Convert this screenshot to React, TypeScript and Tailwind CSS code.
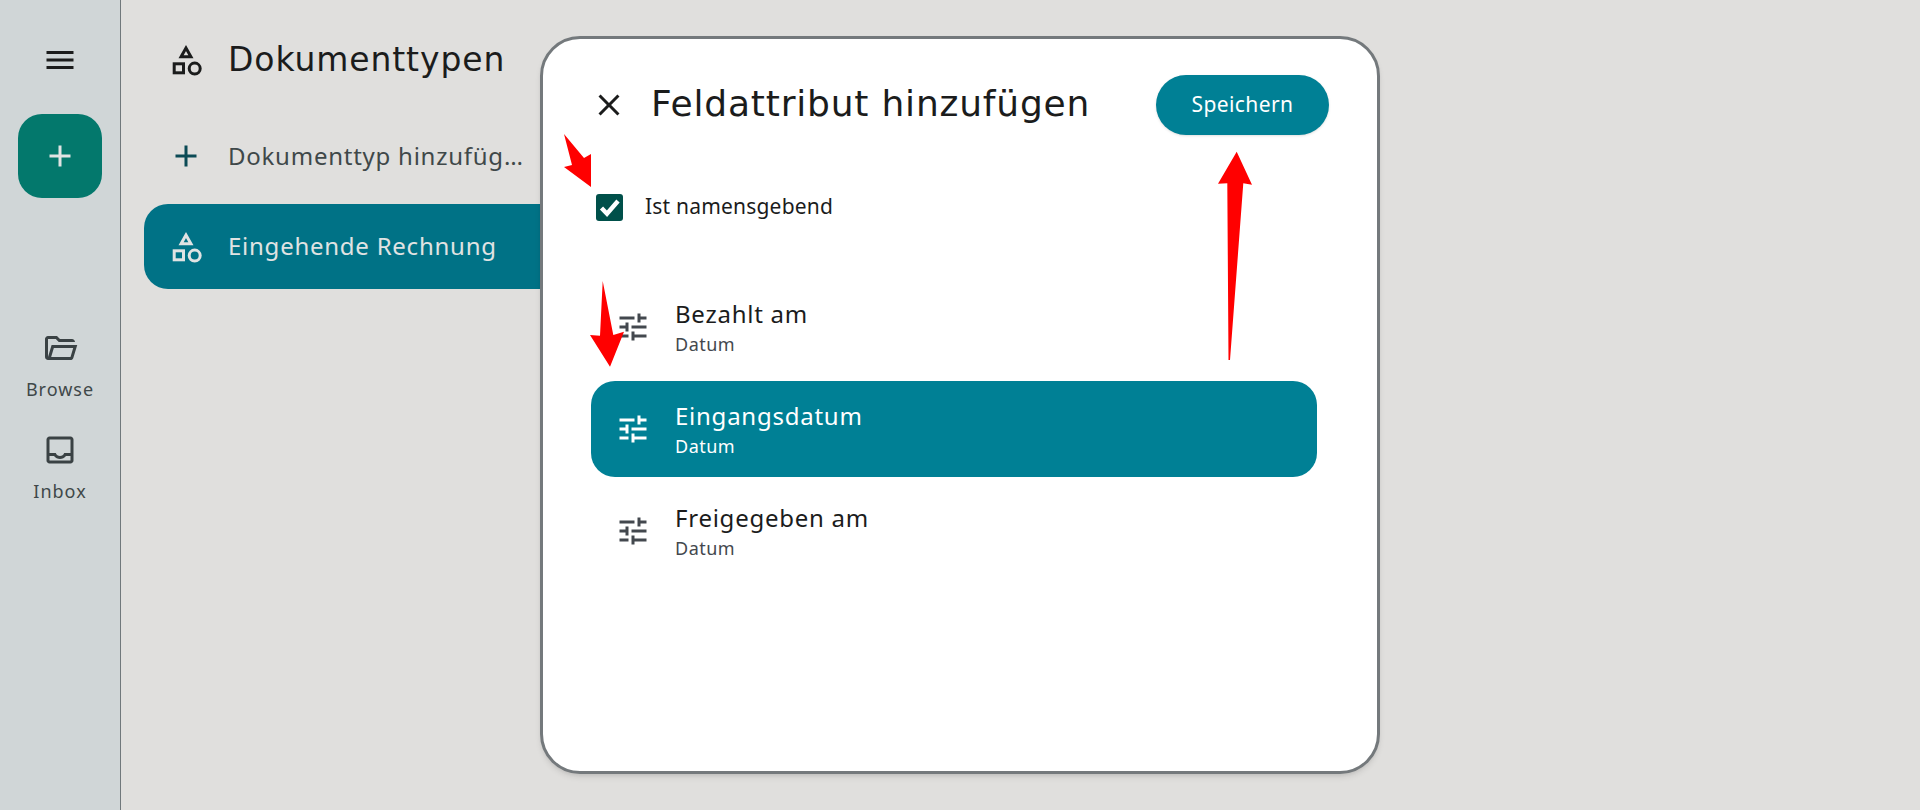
const MenuIcon = () => (
  <svg viewBox="0 0 24 24" className="w-9 h-9 fill-[#1b1c1c]">
    <path d="M3 18h18v-2H3v2zm0-5h18v-2H3v2zm0-7v2h18V6H3z" />
  </svg>
);

const PlusIcon = ({ className }: { className: string }) => (
  <svg viewBox="0 0 24 24" className={className}>
    <path d="M19 13h-6v6h-2v-6H5v-2h6V5h2v6h6v2z" />
  </svg>
);

const ShapesIcon = ({ className }: { className: string }) => (
  <svg viewBox="0 0 36 36" className={className} fill="none" stroke="currentColor" strokeWidth="3">
    <path d="M18 6 L13.07 14.8 H22.93 Z" />
    <rect x="6.2" y="21.8" width="9.3" height="9" />
    <circle cx="26.7" cy="26.6" r="5.5" />
  </svg>
);

const TuneIcon = ({ className }: { className: string }) => (
  <svg viewBox="0 0 24 24" className={className}>
    <path d="M3 17v2h6v-2H3zM3 5v2h10V5H3zm10 16v-2h8v-2h-8v-2h-2v6h2zM7 9v2H3v2h4v2h2V9H7zm14 4v-2H11v2h10zm-6-4h2V7h4V5h-4V3h-2v6z" />
  </svg>
);

const RAIL_ITEMS = [
  {
    label: "Browse",
    d: "M160-160q-33 0-56.5-23.5T80-240v-480q0-33 23.5-56.5T160-800h240l80 80h320q33 0 56.5 23.5T880-640H447l-80-80H160v480l96-320h684L837-217q-8 26-29.5 41.5T760-160H160Zm84-80h516l72-240H316l-72 240Zm0 0 72-240-72 240Zm-84-400v-80 80Z",
  },
  {
    label: "Inbox",
    d: "M200-120q-33 0-56.5-23.5T120-200v-560q0-33 23.5-56.5T200-840h560q33 0 56.5 23.5T840-760v560q0 33-23.5 56.5T760-120H200Zm0-80h560v-120H640q-30 38-71.5 59T480-240q-47 0-88.5-21T320-320H200v120Zm280-120q38 0 69-22t43-58h168v-360H200v360h168q12 36 43 58t69 22ZM200-200h560-560Z",
  },
];

const FIELDS = [
  { label: "Bezahlt am", active: false },
  { label: "Eingangsdatum", active: true },
  { label: "Freigegeben am", active: false },
];

const App = () => {
  return (
    <div className="relative flex h-[810px] w-[1920px] overflow-hidden bg-[#e0dfdd] font-['Noto_Sans',sans-serif] text-[#1b1c1c]">
      {/* Rail */}
      <aside className="flex w-[121px] flex-col items-center border-r border-[#70787b] bg-[#d0d6d7] pt-[42px]">
        <MenuIcon />
        <div className="mt-[36px] flex h-[84px] w-[84px] items-center justify-center rounded-[24px] bg-[#03786c]">
          <PlusIcon className="h-9 w-9 fill-[#e0e3e3]" />
        </div>
        <div className="mt-[132px] flex flex-col gap-[27px]">
          {RAIL_ITEMS.map((item) => (
            <div key={item.label} className="flex h-[75px] flex-col items-center text-[#3f4849]">
              <svg viewBox="0 -960 960 960" className="h-9 w-9 fill-[#3a4244]">
                <path d={item.d} />
              </svg>
              <span className="mt-[8px] text-[18px] leading-[30px] tracking-[1px]">{item.label}</span>
            </div>
          ))}
        </div>
      </aside>

      {/* Document types pane */}
      <section className="flex flex-1 flex-col pl-[23px] pt-[42px]">
        <div className="flex h-9 items-center pl-[24px]">
          <ShapesIcon className="h-9 w-9 text-[#1b1c1c]" />
          <h1 className="ml-[24px] font-['DejaVu_Sans',sans-serif] text-[33px] tracking-[0.9px]">Dokumenttypen</h1>
        </div>
        <div className="mt-[36px] flex h-[84px] w-[440px] items-center pl-[24px]">
          <PlusIcon className="h-9 w-9 fill-[#0b4a55]" />
          <span className="ml-[24px] text-[24px] tracking-[0.75px] text-[#3f4849]">Dokumenttyp hinzufüg…</span>
        </div>
        <div className="mt-[6px] flex h-[85px] w-[440px] items-center rounded-l-[24px] bg-[#007286] pl-[24px] text-[#e0e3e3]">
          <ShapesIcon className="h-9 w-9" />
          <span className="ml-[24px] -mt-[2px] text-[24px] tracking-[0.75px]">Eingehende Rechnung</span>
        </div>
      </section>

      {/* Dialog */}
      <div className="absolute left-[540px] top-[36px] flex h-[738px] w-[840px] flex-col rounded-[40px] border-[3px] border-[#74797c] bg-white pl-[48px] pr-[48px] shadow-md">
        <div className="mt-[36px] flex h-[60px] items-center">
          <svg viewBox="0 0 24 24" className="h-9 w-9 fill-[#1b1c1c]">
            <path d="M19 6.41L17.59 5 12 10.59 6.41 5 5 6.41 10.59 12 5 17.59 6.41 19 12 13.41 17.59 19 19 17.59 13.41 12z" />
          </svg>
          <h2 className="ml-[24px] -translate-y-px font-['DejaVu_Sans',sans-serif] text-[36px] tracking-[0.8px]">
            Feldattribut hinzufügen
          </h2>
          <button className="ml-auto h-[60px] w-[173px] rounded-full bg-[#008095] text-[21px] font-[450] tracking-[0.4px] text-white shadow-sm">
            Speichern
          </button>
        </div>

        <div className="mt-[56px] flex h-[32px] items-center">
          <div className="ml-[5px] flex h-[27px] w-[27px] items-center justify-center rounded-[3px] bg-[#00504a]">
            <svg viewBox="0 0 27 27" className="h-[27px] w-[27px]" fill="none" stroke="#fff" strokeWidth="4.4">
              <path d="M5.5 14 L11 19.8 L22 7" />
            </svg>
          </div>
          <span className="ml-[22px] text-[21px] font-[450] tracking-[0.2px]">Ist namensgebend</span>
        </div>

        <div className="mt-[56px] flex w-[726px] flex-col gap-[6px]">
          {FIELDS.map((field) => (
            <div
              key={field.label}
              className={
                field.active
                  ? "flex h-[96px] items-center rounded-[24px] bg-[#008095] pl-[24px] text-white"
                  : "flex h-[96px] items-center rounded-[24px] pl-[24px]"
              }
            >
              <TuneIcon className={field.active ? "h-9 w-9 fill-white" : "h-9 w-9 fill-[#43484e]"} />
              <div className="ml-[24px] -mt-[2px] flex flex-col">
                <span className="text-[24px] leading-[36px] tracking-[0.75px]">{field.label}</span>
                <span
                  className={
                    field.active
                      ? "text-[18px] leading-[24px] tracking-[0.5px]"
                      : "text-[18px] leading-[24px] tracking-[0.5px] text-[#43484e]"
                  }
                >
                  Datum
                </span>
              </div>
            </div>
          ))}
        </div>
      </div>

      {/* Red annotation arrows */}
      <svg viewBox="0 0 1920 810" className="pointer-events-none absolute inset-0 h-[810px] w-[1920px] fill-[#ff0000]">
        <polygon points="591,187 564,167 572,165 564,134 584,158 591,154" />
        <polygon points="602.7,281 613.3,335 624,331.7 610,366.7 590,335 600,335.7" />
        <polygon points="1236.7,151.7 1252,184.7 1243.3,183.3 1230,360 1228.5,360 1227.3,183.3 1218,183.7" />
      </svg>
    </div>
  );
};

export default App;
